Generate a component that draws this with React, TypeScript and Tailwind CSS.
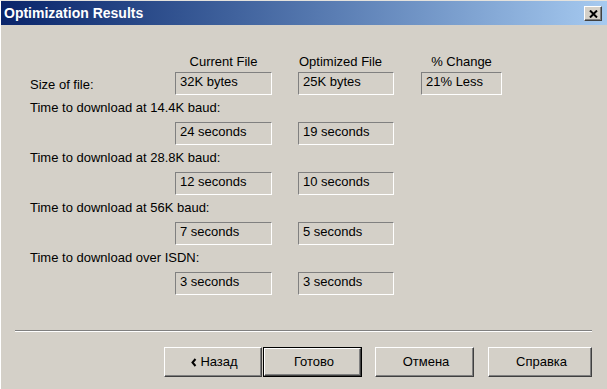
import React from "react";

type Row = { label: string; current: string; optimized: string };

const rows: Row[] = [
  { label: "Time to download at 14.4K baud:", current: "24 seconds", optimized: "19 seconds" },
  { label: "Time to download at 28.8K baud:", current: "12 seconds", optimized: "10 seconds" },
  { label: "Time to download at 56K baud:", current: "7 seconds", optimized: "5 seconds" },
  { label: "Time to download over ISDN:", current: "3 seconds", optimized: "3 seconds" }
];

function Field({ value, className }: { value: string; className: string }) {
  return (
    <div
      className={`h-[23px] shrink-0 border border-t-[#808080] border-l-[#808080] border-r-white border-b-white pl-[4px] text-[13px] leading-[17px] whitespace-nowrap ${className}`}
    >
      {value}
    </div>
  );
}

function Button({ children, isDefault, className }: { children: React.ReactNode; isDefault?: boolean; className: string }) {
  const raised =
    "flex h-full w-full items-center justify-center pl-[3px] border border-t-white border-l-white border-r-[#404040] border-b-[#404040] shadow-[inset_-1px_-1px_0_#808080] text-[13px] text-black";
  if (isDefault) {
    return (
      <div className={`h-[30px] shrink-0 border border-black ${className}`}>
        <div className={raised}>{children}</div>
      </div>
    );
  }
  return (
    <div className={`h-[30px] shrink-0 ${className}`}>
      <div className={raised}>{children}</div>
    </div>
  );
}

export default function App() {
  return (
    <div className="flex h-[389px] w-[607px] flex-col overflow-hidden border-l border-t border-l-white border-t-[#e4e2dd] bg-[#d4d0c8] font-['Liberation_Sans',Arial,sans-serif] text-black select-none">
      {/* title bar */}
      <div className="flex h-[24px] shrink-0 items-center justify-between bg-linear-to-r from-[#0a246a] to-[#a6caf0] pl-[3px] pr-[5px]">
        <span className="text-[14px] leading-[24px] font-bold text-white">Optimization Results</span>
        <div className="mt-[1px] flex h-[15px] w-[18px] items-center justify-center border border-t-white border-l-white border-r-[#404040] border-b-[#404040] bg-[#d4d0c8] shadow-[inset_-1px_-1px_0_#808080]">
          <svg width="9" height="8" viewBox="0 0 9 8">
            <path d="M1 0.5 L8 7.5 M8 0.5 L1 7.5" stroke="#000" strokeWidth="2" />
          </svg>
        </div>
      </div>

      {/* results */}
      <div className="flex flex-col pl-[29px]">
        <div className="mt-[29px] flex h-[16px] text-[13px] leading-[16px]">
          <div className="w-[145px] shrink-0" />
          <div className="w-[97px] shrink-0 text-center">Current File</div>
          <div className="ml-[26px] w-[96px] shrink-0 pl-[1px]">Optimized File</div>
          <div className="ml-[27px] w-[81px] shrink-0 text-center">% Change</div>
        </div>

        <div className="mt-[2px] flex items-center">
          <div className="mt-[2px] w-[145px] shrink-0 text-[13px] leading-[16px]">Size of file:</div>
          <Field value="32K bytes" className="w-[97px]" />
          <Field value="25K bytes" className="ml-[26px] w-[96px]" />
          <Field value="21% Less" className="ml-[27px] w-[81px]" />
        </div>

        {rows.map((r) => (
          <div key={r.label} className="flex flex-col">
            <div className="mt-[5px] h-[16px] text-[13px] leading-[16px]">{r.label}</div>
            <div className="mt-[6px] flex">
              <Field value={r.current} className="ml-[145px] w-[97px]" />
              <Field value={r.optimized} className="ml-[26px] w-[96px]" />
            </div>
          </div>
        ))}
      </div>

      {/* separator */}
      <div className="mt-[35px] ml-[14px] h-[2px] w-[577px] border-t border-b border-t-[#808080] border-b-white" />

      {/* buttons */}
      <div className="mt-[15px] flex">
        <Button className="ml-[163px] w-[98px]">
          <svg width="6" height="9" viewBox="0 0 6 9" className="mr-[3px]">
            <path d="M4.5 1 L1.5 4.5 L4.5 8" stroke="#000" strokeWidth="2" fill="none" />
          </svg>
          Назад
        </Button>
        <Button isDefault className="ml-[1px] w-[99px]">
          Готово
        </Button>
        <Button className="ml-[13px] w-[99px]">Отмена</Button>
        <Button className="ml-[14px] w-[104px]">Справка</Button>
      </div>
    </div>
  );
}
